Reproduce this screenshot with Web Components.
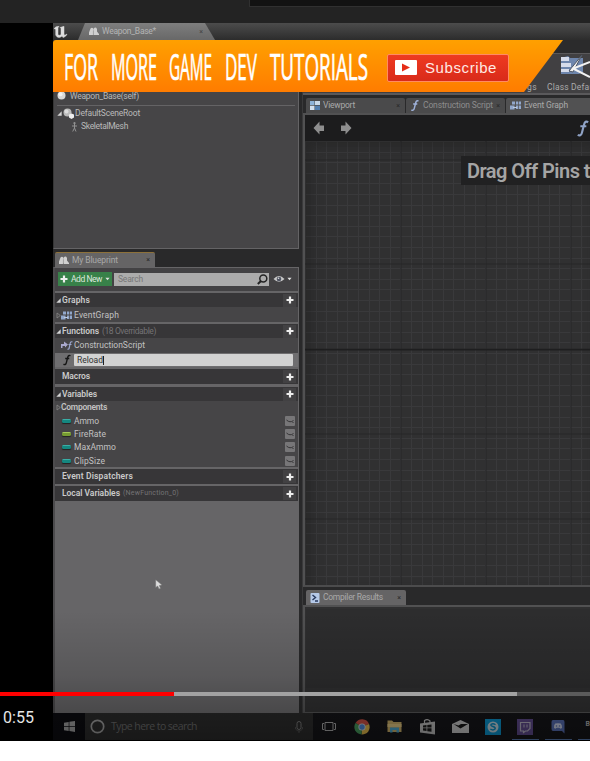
<!DOCTYPE html>
<html lang="en"><head><meta charset="utf-8"><title>Blueprint tutorial</title>
<style>body{margin:0;background:#fff;font-family:Roboto,"Liberation Sans",sans-serif;overflow:hidden}</style></head>
<body>
<page-header></page-header>
<video-player></video-player>
<script>
function define(name, markup, init){
  const t=document.createElement('template'); t.innerHTML=markup;
  customElements.define(name, class extends HTMLElement{
    constructor(){super();this.attachShadow({mode:'open'}).append(t.content.cloneNode(true));}
    connectedCallback(){ if(init) init(this,this.shadowRoot); }
  });
}
/* Text whose tracking is set so that it fills the width given in "w". */
define('ui-label','<style>:host{display:inline-block;white-space:nowrap;flex:none;line-height:1.2}span{display:inline-block}</style><span><slot></slot></span>',(el,r)=>{
  const w=+el.getAttribute('w'), s=r.querySelector('span'), n=el.textContent.length;
  if(w&&n){ s.style.letterSpacing='0'; const m=s.getBoundingClientRect().width; if(m) s.style.letterSpacing=((w-m)/n).toFixed(3)+'px'; }
});
/* A word squeezed horizontally to the width given in "w". */
define('narrow-word',`<style>:host{display:block;flex:none}svg{display:block;overflow:visible}</style><svg height="52"><text x="0" y="40" fill="#fff" stroke="#fff" stroke-width=".7" font-family="'Open Sans',sans-serif" font-size="36.500" lengthAdjust="spacingAndGlyphs"></text></svg>`,(el,r)=>{
  const w=el.getAttribute('w'), t=r.querySelector('text'); r.querySelector('svg').setAttribute('width',w); t.setAttribute('textLength',w); t.textContent=el.getAttribute('word');
});
const icons={
 u:['0 0 14 12','<path d="M0 3C1 1 3 0 5 .3C4 1.300 4 2 4 3V8.500C4.700 9.500 6 9.500 7 8.500V2.500L6 1.500L10 .3V8C10 9.500 11 9.500 13 8C12 10.500 10.500 11 9 11.500L8 10C6.500 12 3 12.200 1.700 9V3.500C1 2.500 .7 2.500 0 3Z" fill="#ddd" stroke="#ddd" stroke-width=".5"/>'],
 people:['0 0 10 9','<path d="M0 8V5.500L1.500 1.500Q3 0 4.300 1.500V8ZM4.500 8V2Q6.500-.8 8 2V4.500L10 7V8Z" fill="#d0d0d0"/><path d="M4.400 3.500V8" stroke="#888" stroke-width=".5"/>'],
 sphere:['0 0 9 9','<circle cx="4.500" cy="4.500" r="4" fill="#d9d9d9"/><circle cx="3.500" cy="3.300" r="2" fill="#f2f2f2"/>'],
 scene:['0 0 11 11','<circle cx="4.500" cy="4.500" r="4" fill="#bbb"/><circle cx="3.500" cy="3.500" r="2" fill="#ddd"/><path d="M6 6.500L8.500 5.500L11 6.500V9.500L8.500 11L6 9.500Z" fill="#eee"/>'],
 bone:['0 0 7 10','<path d="M3.500 1V6M1 4H6M3.500 6L1.700 9.500M3.500 6L5 9.500" fill="none" stroke="#929292"/><circle cx="3.500" cy="1.200" r="1.100" fill="#929292"/>'],
 open:['0 0 5 5','<path d="M4.700.3V4.700H.3Z" fill="#d4d4d4"/>'],
 closed:['0 0 5 7','<path d="M1 1L4.300 3.500L1 6Z" fill="none" stroke="#888" stroke-width=".8"/>'],
 graph:['0 0 11 9','<path d="M2 .5H5V3.500H2ZM0 4.500H4.500V8.500H0ZM6 .5H8V3.500H6ZM8.700 .5H11V3.500H8.700ZM6 4.500H8V8H6ZM8.700 4.500H11V8H8.700Z" fill="#91a7cb"/><path d="M3 6.500H7" stroke="#bac9e0"/>'],
 view:['0 0 10 9','<path d="M0 0H4.500V4H0Z" fill="#8eb3d8"/><path d="M5 0H10V4H5Z" fill="#cad9e8"/><path d="M0 4.700H4.500V9H0Z" fill="#d2e0ef"/><path d="M5 4.700H10V9H5Z" fill="#537eae"/>'],
 f:['0 0 9 12','<path d="M8.300 1.400C7 .2 5.800.9 5.300 3L3.700 9.200C3.200 11.300 1.800 11.600.6 10.700M2.500 4.300H7" fill="none" stroke="currentColor" stroke-width="1.600"/>'],
 cs:['0 0 12 9','<path d="M0 3H3V.5L7 3.500L4 6.500V5H1.500V7H0Z" fill="#aaa9cd"/><path d="M11.500 1Q9.500 0 9 3L8.200 7Q7.800 8.700 6.500 8M7.500 3.500H10.500" fill="none" stroke="#9ba6cd" stroke-width="1.200"/>'],
 plus:['0 0 8 8','<path d="M4 .5V7.500M.5 4H7.500" stroke="#eee" stroke-width="2.200"/>'],
 caret:['0 0 6 4','<path d="M.5.5H5.500L3 3.500Z" fill="#e2e2e2"/>'],
 search:['0 0 11 11','<circle cx="6.300" cy="4.500" r="3.500" fill="none" stroke="#242424" stroke-width="1.500"/><path d="M4 7L.8 10" stroke="#242424" stroke-width="2"/>'],
 eye:['0 0 12 8','<path d="M.5 4Q6-2.200 11.500 4Q6 9.500.5 4Z" fill="#c9c9c9"/><circle cx="6" cy="4" r="2.300" fill="#505563"/><circle cx="5.500" cy="3.300" r=".8" fill="#ddd"/>'],
 lid:['0 0 10 10','<rect width="10" height="10" rx="1" fill="#777678"/><path d="M1.500 4Q5 7.300 8.500 4.500M7.500 6L8.500 7" fill="none" stroke="#353436" stroke-width="1"/>'],
 left:['0 0 12 14','<path d="M.5 7L6.500.5V4.500H11V10H6.500V13.500Z" fill="#8e8e8e"/>'],
 right:['0 0 12 14','<path d="M11.500 7L5.500.5V4.500H1V10H5.500V13.500Z" fill="#8e8e8e"/>'],
 results:['0 0 10 10','<rect x=".5" width="9" height="10" rx="1" fill="#b5c9e8"/><path d="M2.500 2L5.500 4.500L2.500 7M5 8H8" fill="none" stroke="#27395d" stroke-width="1.400"/>'],
 defaults:['0 0 31 26','<path d="M2 4L9 2L11 4H24V18L20 20H2Z" fill="#6e86ad"/><path d="M2 3H10V7H2ZM2 9H12V13H2ZM2 15H10V18H2Z" fill="#d6dceb"/><path d="M10 17L23 1L14 18Z" fill="#f0f0f0" stroke="#4e5664"/><path d="M13 15L31 8M15 15L31 23" stroke="#f3f3f3" stroke-width="2"/>'],
 yt:['0 0 22 15','<rect width="22" height="15" rx="1" fill="#fff"/><path d="M7 3.500V11.500L15 7.500Z" fill="#e52d18"/>'],
 win:['0 0 11 11','<path d="M0 1.800L4.700 1V5H0ZM5.400.8L11 0V5H5.400ZM0 5.700H4.700V10L0 9.300ZM5.400 5.700H11V11L5.400 10.100Z" fill="#909090"/>'],
 ring:['0 0 15 15','<circle cx="7.500" cy="7.500" r="6.200" fill="none" stroke="#8f8f8f" stroke-width="1.700"/>'],
 mic:['0 0 8 12','<rect x="2" y=".5" width="4" height="8" rx="2" fill="none" stroke="#6c6c6c"/><path d="M.5 6V8Q4 12 7.500 8V6M4 10V12" fill="none" stroke="#505050" stroke-width=".8"/>'],
 task:['0 0 14 11','<path d="M3 1.500H11V9.500H3ZM2 2.500H.5V8.500H2M12 2.500H13.500V8.500H12" fill="none" stroke="#959595"/>'],
 chrome:['0 0 16 16','<path d="M8 8L1.500 4A7.500 7.500 0 0 1 15 5Z" fill="#b2463c"/><path d="M8 8L15 5A7.500 7.500 0 0 1 7.500 15.500Z" fill="#c6a243"/><path d="M8 8L7.500 15.500A7.500 7.500 0 0 1 1.500 4Z" fill="#3f8852"/><circle cx="8" cy="8" r="3.600" fill="#bbb"/><circle cx="8" cy="8" r="2.700" fill="#4678bf"/>'],
 folder:['0 0 15 13','<path d="M.5.500H5L6.500 2H14.500V12H.5Z" fill="#b29a5d"/><path d="M.5 4H14.500V7H.5Z" fill="#c6af72"/><path d="M3 12.500V7.500H12V12.500H9.500V10H5.500V12.500Z" fill="#4294b8"/>'],
 store:['0 0 15 16','<path d="M0 4.500L15 2.500V15.500L0 13.500Z" fill="#a8a8a8"/><path d="M4.500 4V1.500Q7.500-.5 10 2V4" fill="none" stroke="#a8a8a8" stroke-width="1.200"/><path d="M3 6.500L6.500 6V8.500H3ZM7.300 6L11.500 5.500V8.500H7.300ZM3 9.300H6.500V12L3 11.500ZM7.300 9.300H11.500V12.800L7.300 12.200Z" fill="#171717"/>'],
 mail:['0 0 17 13','<path d="M0 4L8.500 0L17 4V13H0Z" fill="#b0b0b0"/><path d="M1.500 4L8.500 8.500L16 4H9L6.500 5.500Z" fill="#141414"/>'],
 skype:['0 0 16 16','<rect width="16" height="16" fill="#0a82b4"/><circle cx="8" cy="8" r="5.500" fill="#aabbc3"/><path d="M10.500 5.800Q8 3.800 6 5.500C5 8 11 7 10.200 9.800Q8.200 12 5.300 10" fill="none" stroke="#0a7cab" stroke-width="1.400"/>'],
 twitch:['0 0 16 16','<rect width="16" height="16" fill="#54427c"/><path d="M3.500 3.500H13V9.500L10.500 12H8.500L6.500 13.500V12H3.500Z" fill="none" stroke="#a09cab" stroke-width="1.200"/><path d="M7 5.500V8.500M10 5.500V8.500" stroke="#a09cab"/>'],
 discord:['0 0 14 15','<path d="M2 1H12Q13.500 1 13.500 3V14.500L11 12H2Q.5 12 .5 10V3Q.5 1 2 1Z" fill="#4c609c"/><path d="M3 9Q2.800 5.500 4.200 4.500Q7 3.800 9.800 4.500Q11.200 6 11 9L9.500 9.800L8.500 8.800H5.500L4.500 9.800Z" fill="#b0b6c8"/><circle cx="5.500" cy="7" r=".8" fill="#4c609c"/><circle cx="8.500" cy="7" r=".8" fill="#4c609c"/>'],
 cursor:['0 0 8 11','<path d="M.7.7V8.500L2.700 7L4 10L5.500 9.300L4.300 6.500L7 6Z" fill="#dedede" stroke="#777" stroke-width=".5"/>']
};
define('ui-icon','<style>:host{display:block;flex:none}svg{display:block}</style><div></div>',(el,r)=>{
  const i=icons[el.getAttribute('name')], b=i[0].split(' ');
  r.querySelector('div').innerHTML=`<svg width="${el.getAttribute('w')||b[2]}" height="${el.getAttribute('h')||b[3]}" viewBox="${i[0]}">${i[1]}</svg>`;
});
define('page-header',`<style>:host{display:flex;justify-content:flex-end;height:23px;background:#232323}
i{width:341px;height:7px;box-sizing:border-box;background:#121212;border:solid #303030;border-width:0 0 1px 1px}</style><i></i>`);

/* Title bar with the document tab */
define('title-bar',`<style>:host{display:flex;height:17px;background:linear-gradient(#4c4c4c,#3c3c3c 50%,#2c2c2c);align-items:center;flex:none}
.t{width:137px;height:17px;margin-left:10px;box-sizing:border-box;padding:0 12px 0 11px;display:flex;align-items:center;gap:3px;background:linear-gradient(#7e7e7e,#686868);clip-path:polygon(7px 0,127px 0,137px 100%,0 100%);color:#b4b4b4;font-size:8.500px}
b{margin-left:auto;font:7px Roboto;color:#444}</style>
<ui-icon name="u" style="margin-left:1px"></ui-icon><div class="t"><ui-icon name="people"></ui-icon><ui-label w="54">Weapon_Base*</ui-label><b>×</b></div>`);

define('panel-tab',`<style>:host{display:flex;box-sizing:border-box;height:15px;align-items:center;padding:0 5px 0 4px;gap:3px;background:#4a4a4b;color:#a9a9a9;font-size:8.500px;flex:none;border-radius:2px 2px 0 0}
b{margin-left:auto;font:7px Roboto;color:#292929}:host([active]){background:#656465}:host([gold]){border-top:1px solid #8d713a}:host([fixed]) b{display:none}</style><slot name="icon"></slot><slot></slot><b>×</b>`);

define('components-panel',`<style>:host{display:flex;flex-direction:column;height:157px;width:246px;box-sizing:border-box;background:#464547;border:1px solid #646365;border-top:0;border-left-color:#353535;color:#b9b9b9;font-size:8.500px;flex:none}
div{display:flex;align-items:center;flex:none}.a{height:13px;border-bottom:1px solid #646365;margin:0 3px;gap:4px;align-items:flex-start}.a ui-label{margin-top:-1px}
.b{height:14px;padding-left:3px}.c{height:13px;padding-left:17px;gap:3px}</style>
<div class="a"><ui-icon name="sphere" style="margin-top:-1px"></ui-icon><ui-label w="69">Weapon_Base(self)</ui-label></div>
<div class="b"><ui-icon name="open"></ui-icon><ui-icon name="scene" style="margin:0 1px"></ui-icon><ui-label w="65">DefaultSceneRoot</ui-label></div>
<div class="c"><ui-icon name="bone"></ui-icon><ui-label w="47">SkeletalMesh</ui-label></div>`);

define('section-head',`<style>:host{display:flex;box-sizing:border-box;height:14px;background:#373638;align-items:center;color:#cacaca;font-size:8.500px;font-weight:600;padding-left:1px;flex:none}
.x{width:6px;flex:none}.p{margin-left:auto;width:13px;height:13px;display:grid;place-items:center;background:#424143;margin-right:2px}</style>
<div class="x"><slot name="mark"></slot></div><slot></slot><div class="p"><ui-icon name="plus"></ui-icon></div>`);
define('variable-row',`<style>:host{display:flex;height:13.350px;align-items:center;padding-left:7px;color:#c2c2c2;font-size:8.500px;flex:none}
i{width:9px;height:4px;border-radius:1.500px;background:var(--c);box-shadow:0 1px 1px #222;margin-right:3px;border-top:1px solid var(--d);box-sizing:border-box}
ui-icon{margin-left:auto;margin-right:3px}</style><i></i><slot></slot><ui-icon name="lid"></ui-icon>`);

define('blueprint-panel',`<style>:host{display:flex;flex-direction:column;width:246px;height:446px;box-sizing:border-box;background:#666567;border:1px solid #666567;border-left:2px solid #4c4b4d;font-size:8.500px;color:#c2c2c2;flex:none;border-bottom:0}
.bar{height:23px;box-sizing:border-box;padding-bottom:1px;background:#434244;display:flex;align-items:center;padding-left:3px;flex:none}
.add{width:54px;height:14px;background:#388149;display:flex;align-items:center;justify-content:center;gap:3px;color:#dfe8df}
.s{width:155px;height:13px;box-sizing:border-box;background:#acacac;margin-left:2px;display:flex;align-items:center;justify-content:space-between;padding:0 1px 0 4px;color:#777}
.r{display:flex;align-items:center;background:#464547;flex:none;box-sizing:border-box}
.e{padding:1px 0 0 1px}.sep{height:2px;flex:none}.in{flex:1;height:12px;margin:0 5px 0 3px;background:#d2d2d2;border-radius:1px;display:flex;align-items:center;padding-left:3px;color:#333}
.in i{width:1px;height:9px;background:#222}.v{background:#464547;height:66px;flex:none}.dim{color:#747375;font-weight:400;margin-left:3px}</style>
<div class="bar"><div class="add"><ui-icon name="plus" w="8" h="8"></ui-icon><ui-label w="31">Add New</ui-label><ui-icon name="caret" w="5"></ui-icon></div>
<div class="s"><ui-label w="25">Search</ui-label><ui-icon name="search"></ui-icon></div><ui-icon name="eye" style="margin:0 2px 0 4px"></ui-icon><ui-icon name="caret" w="5"></ui-icon></div>
<div class="sep"></div>
<section-head><ui-icon name="open" slot="mark"></ui-icon><ui-label w="28">Graphs</ui-label></section-head>
<div class="r e" style="height:15px"><ui-icon name="closed"></ui-icon><ui-icon name="graph" style="margin:0 2px 0 0"></ui-icon><ui-label w="45">EventGraph</ui-label></div>
<div class="sep"></div>
<section-head><ui-icon name="open" slot="mark"></ui-icon><ui-label w="37">Functions</ui-label><ui-label w="54" class="dim">(18 Overridable)</ui-label></section-head>
<div class="r" style="height:15px;padding-left:6px;gap:1px"><ui-icon name="cs" w="12"></ui-icon><ui-label w="71">ConstructionScript</ui-label></div>
<div class="r" style="height:14px;padding-left:8px;background:#6f6e70;color:#151515"><ui-icon name="f" w="8" h="12"></ui-icon><div class="in"><ui-label w="26">Reload</ui-label><i></i></div></div>
<div class="sep"></div>
<section-head style="height:15px"><ui-label w="28">Macros</ui-label></section-head>
<div class="sep" style="height:3px"></div>
<section-head><ui-icon name="open" slot="mark"></ui-icon><ui-label w="35">Variables</ui-label></section-head>
<div class="v"><div class="r" style="height:13px;font-weight:600"><ui-icon name="closed" style="margin-left:1px"></ui-icon><ui-label w="46">Components</ui-label></div>
<variable-row style="--c:#148780;--d:#3aaea6"><ui-label w="25">Ammo</ui-label></variable-row>
<variable-row style="--c:#769b32;--d:#a5c957"><ui-label w="32">FireRate</ui-label></variable-row>
<variable-row style="--c:#148780;--d:#3aaea6"><ui-label w="42">MaxAmmo</ui-label></variable-row>
<variable-row style="--c:#148780;--d:#3aaea6"><ui-label w="31">ClipSize</ui-label></variable-row></div>
<div class="sep"></div>
<section-head style="height:15px"><ui-label w="71">Event Dispatchers</ui-label></section-head>
<div class="sep"></div>
<section-head style="height:15px"><ui-label w="58">Local Variables</ui-label><ui-label w="56" class="dim" style="font-size:7px">(NewFunction_0)</ui-label></section-head>`);

define('tool-bar',`<style>:host{display:flex;flex-direction:column;height:55px;background:#2b2b2c;padding-top:13px;box-sizing:border-box;flex:none}
.b{flex:1;background:#414042;border-top:1px solid #5a595b;border-bottom:2px solid #5a595b;display:flex;align-items:flex-end;padding-left:221px;color:#aaa;font-size:8.500px;overflow:hidden}
.g{padding:0 0 1px 3px;width:20px;flex:none}.d{display:flex;flex-direction:column;flex:none}.d ui-icon{margin-left:12px}.d ui-label{padding-bottom:1px;margin-top:2px}</style>
<div class="b"><div class="g"><ui-label w="10">gs</ui-label></div><div class="d"><ui-icon name="defaults"></ui-icon><ui-label w="57">Class Defaults</ui-label></div></div>`);

define('graph-view',`<style>:host{display:flex;flex-direction:column;box-sizing:border-box;height:474px;border:2px solid #515152;border-right:0;border-bottom-color:#4c4c4d;flex:none;overflow:hidden;background:#303031}
.n{height:26px;background:#1c1c1d;display:flex;align-items:center;gap:15px;padding:0 0 0 8px;color:#8fa2c5;flex:none}
.n .f{margin-left:auto;margin-right:1px}
.g{flex:1;padding-top:15px;display:flex;justify-content:flex-end;align-items:flex-start;
background:linear-gradient(#1e1e1f,#1e1e1f) 0 208px/100% 1.500px no-repeat,repeating-linear-gradient(90deg,transparent 0 84px,#252526 84px 85px) 11.500px 0,repeating-linear-gradient(transparent 0 84px,#262627 84px 85px) 0 38.500px,repeating-linear-gradient(90deg,#39393b 0 1px,transparent 1px 10.600px),repeating-linear-gradient(#39393b 0 1px,transparent 1px 10.600px),#303031;box-shadow:inset 6px 6px 12px #1b1b1b66}
.h{background:#212122;height:29px;width:129px;box-sizing:border-box;padding-left:6px;display:flex;align-items:center;overflow:hidden;color:#a5a5a5;font-size:20px;font-weight:600}</style>
<div class="n"><ui-icon name="left"></ui-icon><ui-icon name="right"></ui-icon><ui-icon class="f" name="f" w="12" h="17"></ui-icon></div>
<div class="g"><div class="h"><ui-label w="123">Drag Off Pins t</ui-label></div></div>`);

define('task-bar',`<style>:host{display:flex;height:27px;background:#131316;align-items:stretch;flex:none}
.w{width:32px;flex:none;display:grid;place-items:center;background:#0b0b0f}.s{width:228px;flex:none;box-sizing:border-box;background:#282828;display:flex;align-items:center;padding:0 10px 0 5px;gap:6px;color:#626262;font-size:10.500px;font-family:"Open Sans",sans-serif}
.s ui-icon:last-child{margin-left:auto}.i{width:32.700px;flex:none;display:grid;place-items:center;box-sizing:border-box}
.on{position:relative}.on::after{content:"";position:absolute;left:3px;right:3px;bottom:0;height:1px;background:#4d6c9c}
.i.b{width:15.400px;font:700 7px Roboto;color:#999;place-items:start;padding:7px 0 0 11px}.b::after{right:0}.b{overflow:hidden}</style>
<div class="w"><ui-icon name="win"></ui-icon></div><div class="s"><ui-icon name="ring"></ui-icon><ui-label w="86">Type here to search</ui-label><ui-icon name="mic"></ui-icon></div>
<div class="i"><ui-icon name="task"></ui-icon></div><div class="i"><ui-icon name="chrome"></ui-icon></div><div class="i"><ui-icon name="folder"></ui-icon></div><div class="i"><ui-icon name="store"></ui-icon></div><div class="i"><ui-icon name="mail"></ui-icon></div><div class="i"><ui-icon name="skype"></ui-icon></div><div class="i on"><ui-icon name="twitch"></ui-icon></div><div class="i on"><ui-icon name="discord"></ui-icon></div><div class="i on b"><ui-label>B</ui-label></div>`);

define('editor-window',`<style>:host{display:flex;flex-direction:column;width:537px;height:717px;background:#29292a;overflow:hidden}
.m{display:flex;height:673px}.l{width:246px;display:flex;flex-direction:column;margin-right:3px;flex:none}.r{flex:1;min-width:0;display:flex;flex-direction:column;border-left:1px solid #3a3a3b}
.head{height:52px;background:#2b2b2c;flex:none}.t{display:flex;gap:1px;padding-left:3px;flex:none}
.c{height:109px;box-sizing:border-box;background:#303031;border:2px solid #515152;border-right:0;flex:none;padding:2px 0 24px 1px}.c div{height:100%;background:#2d2d2e}</style>
<title-bar></title-bar><div class="m"><div class="l"><div class="head"></div><components-panel></components-panel>
<panel-tab active gold style="width:100px;margin:3px 0 0 2px"><ui-icon name="people" slot="icon"></ui-icon><ui-label w="46">My Blueprint</ui-label></panel-tab>
<blueprint-panel></blueprint-panel></div>
<div class="r"><tool-bar></tool-bar>
<div class="t" style="margin-top:3px"><panel-tab style="width:99px"><ui-icon name="view" slot="icon"></ui-icon><ui-label w="32">Viewport</ui-label></panel-tab><panel-tab style="width:99px;color:#8d8d8d"><ui-icon name="f" slot="icon" w="10" h="11" style="color:#9fb2da"></ui-icon><ui-label w="70">Construction Script</ui-label></panel-tab><panel-tab active fixed style="width:99px;background:#515152"><ui-icon name="graph" slot="icon"></ui-icon><ui-label w="44">Event Graph</ui-label></panel-tab></div>
<graph-view></graph-view>
<div class="t" style="margin-top:3px"><panel-tab active style="width:100px"><ui-icon name="results" slot="icon"></ui-icon><ui-label w="60">Compiler Results</ui-label></panel-tab></div>
<div class="c"><div></div></div></div></div><task-bar></task-bar>`);

define('promo-banner',`<style>:host{display:flex;align-items:center;width:510px;height:52px;box-sizing:border-box;background:linear-gradient(#ffa000,#ff7c00);clip-path:polygon(0 0,100% 0,471px 100%,0 100%);padding-left:11px;border-radius:3px 0 0 0}
.w{display:flex;gap:13px}.s{width:122px;height:28px;box-sizing:border-box;border:1px solid #ff8b63;border-radius:2px;background:linear-gradient(#ee3a20,#d92b1a);display:flex;align-items:center;gap:8px;padding-left:7px;margin:3px 0 0 19px;color:#ffe9e3;font:15px "Liberation Sans",sans-serif}</style>
<div class="w"><narrow-word w="34" word="FOR"></narrow-word><narrow-word w="46" word="MORE"></narrow-word><narrow-word w="43" word="GAME" style="margin-left:-1px"></narrow-word><narrow-word w="32" word="DEV"></narrow-word><narrow-word w="98" word="TUTORIALS"></narrow-word></div>
<div class="s"><ui-icon name="yt"></ui-icon><ui-label w="72">Subscribe</ui-label></div>`);

define('video-player',`<style>:host{display:block;position:relative;height:718px;background:#000;overflow:hidden}
editor-window{margin-left:53px}promo-banner{position:absolute;left:53px;top:17px}
.shade{position:absolute;left:0;right:0;bottom:0;height:130px;background:linear-gradient(#0000,#0002 50%,#0006)}
.cur{position:absolute;left:155px;top:556px}
.p{position:absolute;left:0;right:0;top:669px;height:4px;display:flex;background:#5b5b5b}.p i{width:174px;background:#f00}.p b{width:343px;background:#a2a2a2}
.time{position:absolute;left:3px;top:685px;font-size:16px;color:#e6e6e6}</style>
<editor-window></editor-window><promo-banner></promo-banner><ui-icon class="cur" name="cursor"></ui-icon><div class="shade"></div><div class="p"><i></i><b></b></div><ui-label class="time" w="31">0:55</ui-label>`);
</script></body></html>
